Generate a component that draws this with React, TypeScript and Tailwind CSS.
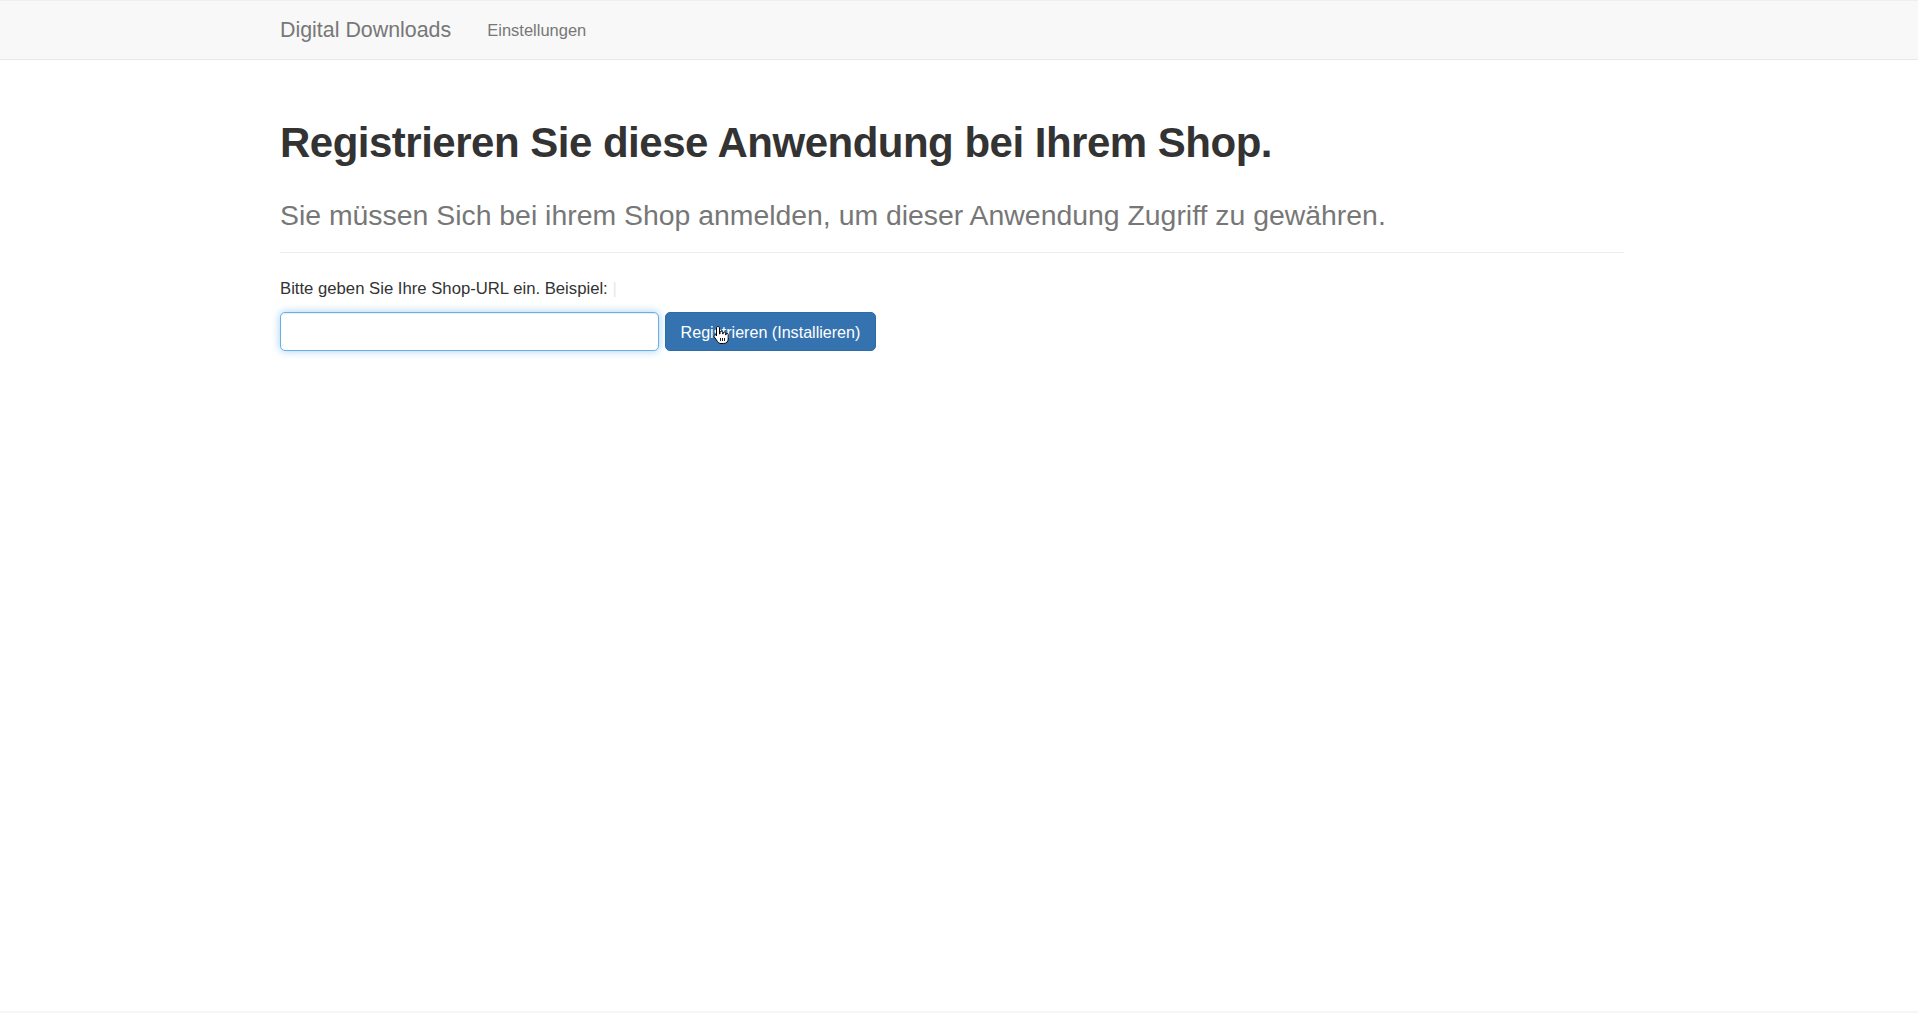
import React from "react";

function HandCursor() {
  return (
    <svg
      width="16"
      height="20"
      viewBox="0 0 16 20"
      className="pointer-events-none absolute left-[47px] top-[12px]"
    >
      <path
        d="M5 1.5c.8 0 1.5.7 1.5 1.5v6h.5V7.5c0-.8.7-1.3 1.4-1.3s1.3.6 1.3 1.3V9h.4V8.3c0-.7.6-1.2 1.3-1.2s1.3.5 1.3 1.2V10h.3v-.7c0-.6.5-1 1.1-1s1.1.5 1.1 1.1V14c0 2.5-1.8 4.5-4.5 4.5H8c-1.5 0-2.6-.7-3.4-1.8L1.3 12c-.5-.7-.3-1.5.3-1.9.6-.4 1.4-.3 1.9.3L3.5 11V3c0-.8.7-1.5 1.5-1.5z"
        fill="#ffffff"
        stroke="#000000"
        strokeWidth="1"
        strokeLinejoin="round"
      />
      <path d="M7.5 13v3M9.5 13v3M11.5 13v3" stroke="#000000" strokeWidth="0.9" />
    </svg>
  );
}

export default function App() {
  return (
    <div
      className="min-h-[1013px] flex flex-col bg-white text-[#333333]"
      style={{ fontFamily: '"Liberation Sans", Arial, Helvetica, sans-serif' }}
    >
      <nav className="h-[60px] bg-[#f8f8f8] border-b border-[#e7e7e7] border-t border-t-[#efefef]">
        <div className="ml-[280px] h-full flex items-center">
          <span className="text-[21.4px] leading-[24px] text-[#777777]">Digital Downloads</span>
          <span className="ml-[36px] text-[16.5px] leading-[19px] text-[#777777]">Einstellungen</span>
        </div>
      </nav>

      <main className="ml-[280px] w-[1344px] flex flex-col">
        <h1 className="mt-[59px] text-[42px] leading-[47px] tracking-[-0.5px] font-bold text-[#333333]">
          Registrieren Sie diese Anwendung bei Ihrem Shop.
        </h1>
        <h3 className="mt-[33px] text-[28.4px] leading-[32px] text-[#777777]">
          Sie müssen Sich bei ihrem Shop anmelden, um dieser Anwendung Zugriff zu gewähren.
        </h3>
        <div className="mt-[21px] h-px bg-[#eeeeee]" />
        <label className="mt-[26px] text-[16.7px] leading-[20px] text-[#333333]">
          Bitte geben Sie Ihre Shop-URL ein. Beispiel: <span className="text-[#e8e8e8]">|</span>
        </label>
        <div className="mt-[13px] flex gap-[6px]">
          <input
            type="text"
            className="w-[379px] h-[39px] rounded-[5px] border border-[#66afe9] bg-white px-[14px] text-[16.7px] outline-none shadow-[inset_0_1px_1px_rgba(0,0,0,0.075),0_0_8px_rgba(102,175,233,0.6)]"
          />
          <button className="relative w-[211px] h-[39px] rounded-[5px] border border-[#2e6da4] bg-[#3473b0] text-white text-[16.1px] leading-[20px]">
            Registrieren (Installieren)
            <HandCursor />
          </button>
        </div>
      </main>

      <div className="flex-1" />
      <div className="h-[2px] bg-[#f6f6f6]" />
    </div>
  );
}
